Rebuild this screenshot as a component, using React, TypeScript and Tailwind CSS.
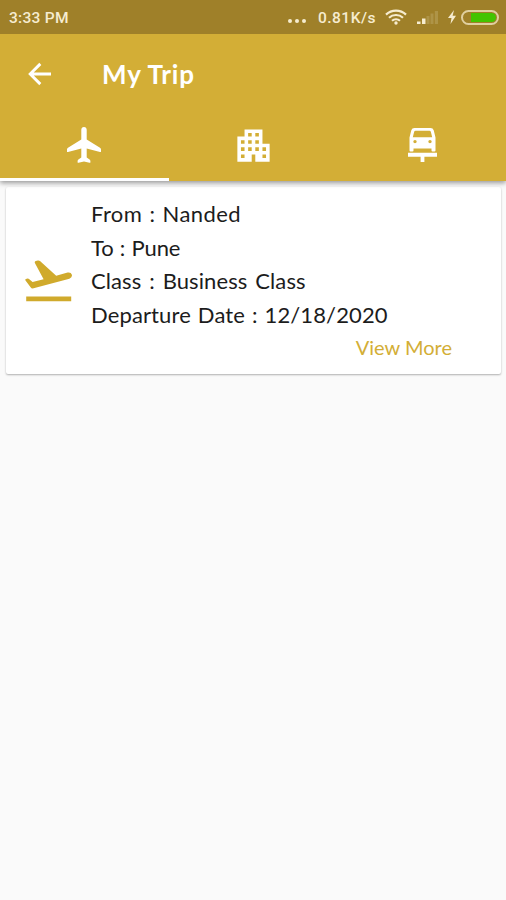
import { MdApartment } from 'react-icons/md';

function BackIcon() {
  return (
    <svg className="mb-px size-8" viewBox="0 0 32 32" fill="none" stroke="currentColor" strokeWidth="2.9">
      <path d="M27 16H7M16.300 5.900 6.200 16 16.300 26.100" />
    </svg>
  );
}

function PlaneIcon() {
  return (
    <svg className="mr-px h-9 w-[34px]" viewBox="0 0 34 36" fill="currentColor">
      <path d="M17 0c-1.700 0-2.700 1.200-2.700 2.800V12.600L1 20.800Q0 21.500 0 22.600V24.400Q0 25.200 1 24.900L14.300 21.500V30.500L11.400 32.400Q10.600 33 10.600 34V35.300Q10.600 36 11.500 35.800L17 34.600 22.500 35.800Q23.400 36 23.400 35.300V34Q23.400 33 22.600 32.400L19.700 30.500V21.500L33 24.900Q34 25.200 34 24.400V22.600Q34 21.500 33 20.800L19.700 12.600V2.800C19.700 1.200 18.700 0 17 0z" />
    </svg>
  );
}

function CarIcon() {
  return (
    <svg className="h-[34px] w-[29px]" viewBox="0 0 29 34" fill="currentColor">
      <path
        fillRule="evenodd"
        d="M6.500 0h16Q25 0 25.700 2.300L27.500 9.500V22.500Q27.500 23.500 26.500 23.500H24.500Q23.500 23.500 23.500 22.500V20.500H5.500V22.500Q5.500 23.500 4.500 23.500H2.500Q1.500 23.500 1.500 22.500V9.500L3.300 2.300Q4 0 6.500 0zM7.500 2.800Q6.400 2.800 6.100 3.900L4.800 9.200H24.200L22.900 3.900Q22.600 2.800 21.500 2.800zM7 11.900a1.700 1.700 0 1 0 0 3.400 1.700 1.700 0 0 0 0-3.400zM22 11.900a1.700 1.700 0 1 0 0 3.400 1.700 1.700 0 0 0 0-3.400z"
      />
      <path d="M0 24.700h29v4H16.400V34h-3.800v-5.300H0z" />
    </svg>
  );
}

function HotelIcon() {
  return <MdApartment className="size-[43px]" />;
}

function TakeoffIcon({ className }: { className: string }) {
  return (
    <svg className={className} viewBox="0 0 48 42" fill="currentColor">
      <path d="M1 19 2.600 18.500Q3.400 18.300 4 18.900L7.600 22.100 18.600 19.200 10 3.300Q9.200 1.700 10.800 1.100L12.800.5Q14 .2 15 1.100L31.200 15.700 42.600 12.600Q46 12 46.900 14.700 47.500 17.600 44.400 18.700L8.600 28.300Q6.600 28.900 5.600 27.200L.5 20.500Q-.1 19.400 1 19z" />
      <path d="M1.200 36.500h45v4.700h-45z" />
    </svg>
  );
}

const tabs = [
  { id: 'flights', Icon: PlaneIcon },
  { id: 'hotels', Icon: HotelIcon },
  { id: 'cars', Icon: CarIcon },
];

const details = [
  { label: 'From', value: 'Nanded', spacing: 'tracking-[0.4px] [word-spacing:1.2px]' },
  { label: 'To', value: 'Pune', spacing: 'tracking-[-0.15px] [word-spacing:0.9px]' },
  { label: 'Class', value: 'Business Class', spacing: 'tracking-[0.1px] [word-spacing:2.1px]' },
  { label: 'Departure Date', value: '12/18/2020', spacing: 'tracking-[0.12px] [word-spacing:1.2px]' },
];

function StatusBar() {
  return (
    <div className="flex h-[34px] items-center bg-[#9f8029] pl-[9px] pr-[7px] font-[Roboto,sans-serif] text-[15.5px] font-medium text-[#f6ecd0]">
      <span className="pt-1 tracking-[0.3px]">3:33 PM</span>
      <div className="ml-auto flex items-center">
        <span className="mr-3 mt-2 flex gap-[3px]">
          <i className="size-1 rounded-full bg-[#f6ecd0]" />
          <i className="size-1 rounded-full bg-[#f6ecd0]" />
          <i className="size-1 rounded-full bg-[#f6ecd0]" />
        </span>
        <span className="mr-[9px] pt-1 tracking-[0.5px]">0.81K/s</span>
        {/* wifi */}
        <svg className="mr-[10px] h-4 w-[22px]" viewBox="0 0 22 16" fill="none" stroke="#f6ecd0" strokeWidth="2.2">
          <path d="M1 5.6a14.5 14.5 0 0 1 20 0M4 8.8a10.2 10.2 0 0 1 14 0M7 11.8a6 6 0 0 1 8 0" />
          <circle cx="11" cy="14" r="1.7" fill="#f6ecd0" stroke="none" />
        </svg>
        {/* signal */}
        <svg className="mr-[10px] h-[14px] w-[21px]" viewBox="0 0 21 14" fill="#f6ecd0">
          <path d="M0 11.500h3.500V14H0zM5 8.500h3.500V14H5z" />
          <path d="M9.500 6H12.500v8H9.500zM13.500 3.500h3V14h-3zM17.800 1H21v13h-3.200z" opacity=".18" />
        </svg>
        <svg className="mr-[5px] h-[14px] w-2" viewBox="0 0 8 14" fill="#f6ecd0">
          <path d="M6 0 0 8h3.500L2.500 14 8 5.800H4.600z" />
        </svg>
        <span className="flex h-[15px] w-[38px] justify-end rounded-full border-2 border-[#e0cfa0] p-px">
          <i className="h-full w-[25px] rounded-r-full bg-[#43c400]" />
        </span>
      </div>
    </div>
  );
}

export default function App() {
  return (
    <div className="h-[900px] w-[506px] overflow-hidden bg-[#fafafa] font-[Lato,sans-serif]">
      {/* app bar */}
      <header className="relative h-[181px] bg-[#d3ae36] text-white shadow-[0_2px_5px_rgba(0,0,0,0.4)]">
        <StatusBar />
        <div className="flex h-20 items-center pl-6">
          <BackIcon />
          <h1 className="ml-[46px] text-[26px] font-bold leading-8 tracking-[0.85px]">My Trip</h1>
        </div>
        <nav className="grid h-[67px] grid-cols-3">
          {tabs.map(({ id, Icon }, i) => (
            <button
              key={id}
              className={`flex items-center justify-center border-b-[3px] pb-[2px] pl-px ${i === 0 ? 'border-white' : 'border-transparent'}`}
            >
              <Icon />
            </button>
          ))}
        </nav>
      </header>

      {/* trip card */}
      <main className="px-[5px] pt-[6px]">
        <article className="ml-px flex h-[187px] w-[495px] rounded-[2px] bg-white pl-[19px] shadow-[0_1px_2px_rgba(0,0,0,0.3)]">
          <TakeoffIcon className="mt-[73px] h-[42px] w-12 shrink-0 text-[#d0aa2c]" />
          <div className="ml-[18px] w-[361px] pt-[10px] text-[22px] leading-[33.5px] text-[#1c1c1c]">
            {details.map((d) => (
              <p key={d.label} className={d.spacing}>
                {d.label} : {d.value}
              </p>
            ))}
            <p className="text-right text-[20px] text-[#d3ae36]">View More</p>
          </div>
        </article>
      </main>
    </div>
  );
}
